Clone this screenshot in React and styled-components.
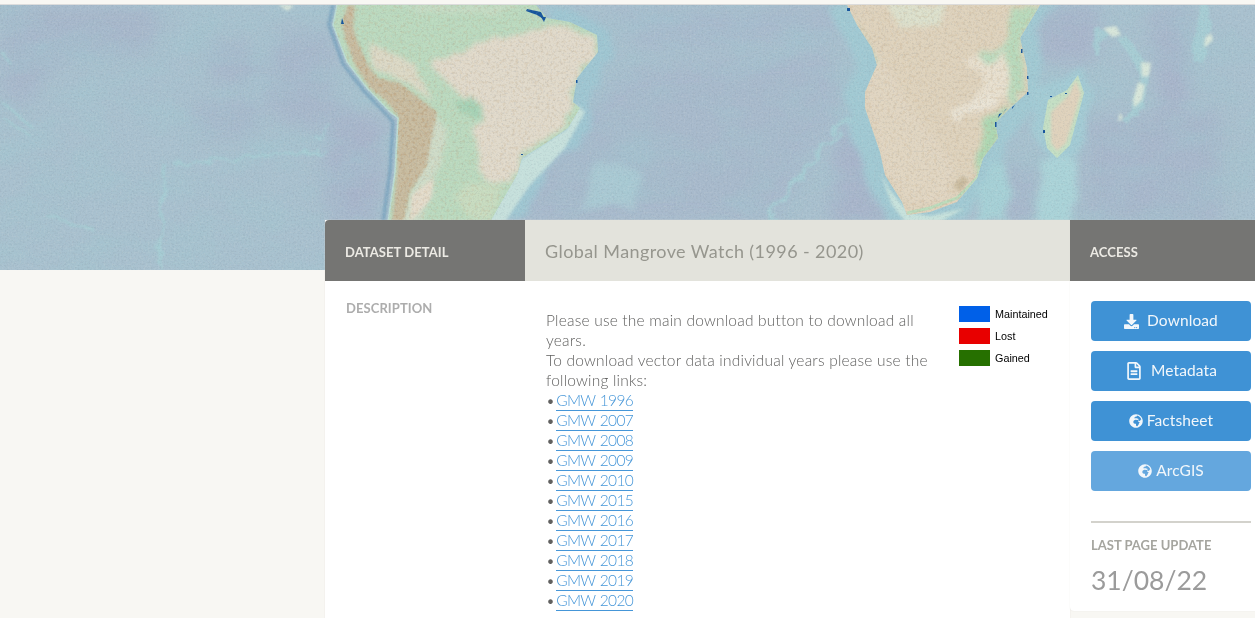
import React from "react";
import styled, { createGlobalStyle } from "styled-components";
import { FaDownload, FaRegFileAlt, FaGlobeAfrica } from "react-icons/fa";

const GlobalStyle = createGlobalStyle`
  html, body {
    margin: 0;
    height: 100%;
    overflow: hidden;
    background: #f8f7f3;
  }
`;

const years = [1996, 2007, 2008, 2009, 2010, 2015, 2016, 2017, 2018, 2019, 2020];

const legend = [
  { label: "Maintained", color: "#0060e8" },
  { label: "Lost", color: "#e80000" },
  { label: "Gained", color: "#267000" },
];

const buttons = [
  { label: "Download", icon: <FaDownload size={15} />, gap: 8 },
  { label: "Metadata", icon: <FaRegFileAlt size={18} />, gap: 8 },
  { label: "Factsheet", icon: <FaGlobeAfrica size={14} />, gap: 4 },
  { label: "ArcGIS", icon: <FaGlobeAfrica size={14} />, gap: 4, faded: true },
];

const SOUTH_AMERICA =
  "M337 5L333 25L347 62L367 88L390 112L398 118L395 172L388 222L490 222L517 175L522 158L543 145L568 128L580 108L573 102L577 78L598 52L597 35L570 22L547 18L536 5Z";
const ANDES =
  "M348 5L355 5L353 25L356 38L368 65L378 78L400 83L437 112L430 145L427 165L410 192L403 222L392 222L397 172L398 115L385 100L370 88L355 65L345 38L342 22Z";
const AFRICA =
  "M847 5L857 25L872 48L877 65L865 92L865 108L880 152L885 175L902 202L907 215L930 212L957 202L977 178L983 158L998 138L995 123L1010 108L1028 92L1027 68L1020 38L1040 5Z";
const MADAGASCAR =
  "M1078 75L1084 93L1070 145L1057 158L1047 148L1043 128L1048 100L1067 90Z";

// Satellite style background map, coordinates are page pixels
const WorldMap = () => (
  <MapSvg viewBox="0 5 1255 265" preserveAspectRatio="none">
    <defs>
      <filter id="cloud" x="0" y="0" width="100%" height="100%" colorInterpolationFilters="sRGB">
        <feTurbulence type="fractalNoise" baseFrequency="0.018 0.03" numOctaves="5" seed="11" />
        <feColorMatrix values="0 0 0 0 0.63  0 0 0 0 0.79  0 0 0 0 0.82  1.6 0 0 0 -0.6" />
      </filter>
      <filter id="grainDark" x="0" y="0" width="100%" height="100%" colorInterpolationFilters="sRGB">
        <feTurbulence type="fractalNoise" baseFrequency="0.55" numOctaves="3" seed="3" />
        <feColorMatrix values="0 0 0 0 0.45  0 0 0 0 0.5  0 0 0 0 0.56  0 3 0 0 -1.45" />
      </filter>
      <filter id="grainLight" x="0" y="0" width="100%" height="100%" colorInterpolationFilters="sRGB">
        <feTurbulence type="fractalNoise" baseFrequency="0.5" numOctaves="3" seed="9" />
        <feColorMatrix values="0 0 0 0 0.95  0 0 0 0 0.95  0 0 0 0 0.92  0 0 3 0 -1.45" />
      </filter>
      <filter id="grainLand" x="0" y="0" width="100%" height="100%" colorInterpolationFilters="sRGB">
        <feTurbulence type="fractalNoise" baseFrequency="0.32" numOctaves="3" seed="21" />
        <feColorMatrix values="0 0 0 0 0.74  0 0 0 0 0.64  0 0 0 0 0.5  0 4 0 0 -2" />
      </filter>
      <filter id="rough" x="-10%" y="-10%" width="120%" height="120%">
        <feTurbulence type="fractalNoise" baseFrequency="0.07" numOctaves="3" seed="5" result="n" />
        <feDisplacementMap in="SourceGraphic" in2="n" scale="10" result="d" />
        <feGaussianBlur in="d" stdDeviation="2.6" />
      </filter>
      <filter id="roughThin" x="-10%" y="-10%" width="120%" height="120%">
        <feTurbulence type="fractalNoise" baseFrequency="0.06" numOctaves="4" seed="14" result="n" />
        <feDisplacementMap in="SourceGraphic" in2="n" scale="14" result="d" />
        <feGaussianBlur in="d" stdDeviation="1.1" />
      </filter>
      <filter id="roughWide" x="-10%" y="-10%" width="120%" height="120%">
        <feTurbulence type="fractalNoise" baseFrequency="0.04" numOctaves="3" seed="8" result="n" />
        <feDisplacementMap in="SourceGraphic" in2="n" scale="16" result="d" />
        <feGaussianBlur in="d" stdDeviation="3" />
      </filter>
      <filter id="soft8" x="-30%" y="-30%" width="160%" height="160%"><feGaussianBlur stdDeviation="9" /></filter>
      <filter id="soft2" x="-30%" y="-30%" width="160%" height="160%"><feGaussianBlur stdDeviation="1.4" /></filter>
      <clipPath id="sa"><path d={SOUTH_AMERICA} /></clipPath>
      <clipPath id="andes"><path d={ANDES} /></clipPath>
      <clipPath id="af"><path d={AFRICA} /></clipPath>
      <clipPath id="mg"><path d={MADAGASCAR} /></clipPath>
    </defs>

    <rect x="0" y="5" width="1255" height="265" fill="#a9c1cf" />

    {/* deep basins */}
    <g fill="#a8b5cb" filter="url(#soft8)">
      <path d="M0 5L165 5L150 50L60 60L20 110L0 90Z" opacity="0.8" />
      <path d="M205 45L250 45L262 80L215 85Z" opacity="0.8" />
      <path d="M275 35L335 30L330 130L290 125L265 105Z" opacity="0.8" />
      <path d="M190 105L260 100L255 135L200 135Z" opacity="0.8" />
      <path d="M335 100L385 125L378 225L330 225L325 170Z" />
      <path d="M530 160L625 70L830 50L845 110L820 140L780 220L510 225Z" opacity="0.55" />
      <path d="M610 5L840 5L835 40L640 50Z" opacity="0.5" />
      <path d="M1040 5L1100 5L1095 60L1040 60Z" />
      <path d="M1150 5L1190 5L1190 100L1160 120Z" />
      <path d="M1010 165L1035 165L1032 225L1010 225Z" />
      <path d="M1085 120L1220 110L1220 225L1085 225Z" opacity="0.8" />
      <path d="M835 130L865 120L880 205L900 225L830 225Z" />
    </g>
    <rect x="0" y="5" width="1255" height="265" filter="url(#cloud)" opacity="0.5" />

    {/* shelf seas and ridges */}
    <g fill="none" stroke="#a6d0d5" filter="url(#roughThin)" opacity="0.75">
      <path d="M0 50L12 65M0 100L35 130M165 165L160 268M45 215L95 230M175 165L325 150M318 140L330 125" strokeWidth="2.5" />
      <path d="M2 118L30 135" strokeWidth="2" />
      <path d="M830 135C845 125 855 118 862 112" strokeWidth="6" />
      <path d="M768 222C790 190 800 175 812 160C825 140 835 140 845 135" strokeWidth="4" />
      <path d="M1105 30C1095 38 1094 48 1098 52M1124 40C1140 60 1148 75 1142 95L1125 122" strokeWidth="9" />
      <path d="M1205 5L1198 62" strokeWidth="10" />
    </g>
    <g filter="url(#roughWide)">
      <path d="M548 5L575 12L610 32L612 58L590 90L592 128L575 150L545 170L525 222L480 226L500 160L570 90Z" fill="#9fc6d2" />
      <path d="M590 160L640 170L630 205L580 210Z" fill="#aacfd6" opacity="0.7" />
      <path d="M825 5L845 40L858 65L845 95L850 130L865 175L888 225L955 224L990 185L1005 150L1018 122L1040 95L1042 60L1035 30L1060 5Z" fill="#a1c9d3" />
      <path d="M1030 95L1080 65L1094 95L1078 155L1060 168L1034 140Z" fill="#a3cbd4" />
      <path d="M988 160L1008 165L1006 222L975 222Z" fill="#a6d0d6" />
      <path d="M1040 160L1075 160L1078 200L1065 225L1038 225Z" fill="#aad3d8" />
    </g>
    <g fill="#d8e6da" filter="url(#soft2)">
      <path d="M1103 28L1116 26L1121 35L1112 37Z" />
      <path d="M1141 62L1151 63L1149 76L1142 77Z" />
      <path d="M1138 82L1145 85L1142 100L1134 108L1133 100Z" />
      <path d="M1211 33L1213 40L1204 48L1205 38Z" />
      <path d="M278 5L294 5L288 11Z" />
      <path d="M1120 112L1123 118L1118 122Z" />
    </g>
    <path d="M880 172L892 205L907 224L940 222L965 208L930 216L908 212L890 190Z" fill="#c7e2dc" filter="url(#soft2)" />
    <path d="M522 158L512 180L488 222L505 222L530 185L565 148L585 112L576 104L568 128Z" fill="#c6e0dc" filter="url(#soft2)" />

    {/* South America */}
    <g clipPath="url(#sa)">
      <rect x="320" y="5" width="300" height="220" fill="#bbdabf" />
      <g filter="url(#rough)">
        <path d="M430 65L470 45L510 35L560 25L597 38L597 55L573 82L572 105L563 128L523 152L517 172L510 182L483 180L473 132L483 118L460 95Z" fill="#e1dacb" />
        <path d="M367 42L413 62L433 102L407 82L373 68Z" fill="#dcd9c6" />
        <path d="M400 5L520 5L500 14L420 12Z" fill="#c6dcc4" />
        <path d="M457 102L470 96L484 108L478 118L462 114Z" fill="#a6d2b5" />
        <path d="M433 112L447 130L437 180L420 222L396 222L412 192Z" fill="#cfdcc8" />
        <path d="M453 195L470 182L505 185L490 217L470 218Z" fill="#c8dcc0" />
      </g>
      <path d={ANDES} fill="#c8bca0" filter="url(#soft2)" />
      <path d="M412 195L434 178L430 200L410 222Z" fill="#e4dccb" filter="url(#soft2)" />
      <rect x="320" y="5" width="300" height="220" filter="url(#grainLand)" opacity="0.22" />
    </g>
    <g clipPath="url(#andes)">
      <rect x="330" y="5" width="120" height="220" filter="url(#grainLand)" opacity="0.5" />
    </g>
    <path d="M337 5L333 25L347 62L367 88L390 112L398 118L395 172L388 222" fill="none" stroke="#bcdcd4" strokeWidth="1.5" />
    <path d="M333 5L329 25L343 64L364 91L387 115L393 122L390 172L383 222" fill="none" stroke="#6d9bb9" strokeWidth="2.5" filter="url(#soft2)" />

    {/* Africa */}
    <g clipPath="url(#af)">
      <rect x="840" y="5" width="210" height="220" fill="#dfd3bd" />
      <g filter="url(#rough)">
        <path d="M887 5L945 5L940 25L900 28Z" fill="#dde1cd" />
        <path d="M875 48L900 90L955 170L945 200L910 205L885 170L868 100Z" fill="#e1d6c2" />
        <path d="M960 60L1012 50L1024 92L995 100L975 105L985 75Z" fill="#e8e0cf" />
        <path d="M1012 8L1040 5L1022 40L1025 90L1010 108L1006 55Z" fill="#b9dabc" />
        <path d="M980 55L1010 42L1006 52L985 65Z" fill="#bcdcbf" />
        <path d="M947 112L990 95L1000 100L955 120Z" fill="#eae4d6" />
        <path d="M983 122L1008 105L1000 138L985 160L975 175L983 140Z" fill="#aed8b3" />
        <path d="M855 15L870 50L880 65L872 60Z" fill="#bcdcbf" />
      </g>
      <path d="M953 186L962 176L969 180L960 192Z" fill="#c9bb9f" filter="url(#soft2)" />
      <path d="M907 213L930 208L957 198L977 178L983 158" fill="none" stroke="#bcdcbc" strokeWidth="3" />
      <rect x="840" y="5" width="210" height="220" filter="url(#grainLand)" opacity="0.22" />
    </g>
    <g clipPath="url(#mg)">
      <rect x="1040" y="70" width="50" height="92" fill="#c4dfc4" />
      <path d="M1076 80L1081 94L1066 143L1057 151L1051 143L1051 112L1068 96Z" fill="#dfd2bc" filter="url(#soft2)" />
    </g>

    {/* mangrove spots */}
    <g fill="#15549c">
      <path d="M527 9L541 12L545 20L537 15L526 11Z" />
      <path d="M541 17L546 17L544 22Z" />
      <path d="M342 18L344 24L341 24Z" />
      <rect x="847" y="8" width="3" height="3" />
      <rect x="1043" y="130" width="2" height="3" />
      <path d="M999 114L1002 113L998 118ZM1005 110L1007 108L1004 112ZM1012 107L1015 105L1012 109Z" />
      <rect x="1027" y="92" width="1.5" height="3" />
      <rect x="1027" y="76" width="1.5" height="3" />
      <rect x="1021" y="49" width="1.5" height="4" />
      <rect x="995" y="122" width="1.5" height="5" />
      <rect x="1050" y="96" width="2" height="1" />
      <rect x="1065" y="93" width="2" height="1" />
      <rect x="576" y="80" width="1.5" height="3" />
      <rect x="521" y="154" width="2" height="1" />
    </g>
    <rect x="0" y="5" width="1255" height="265" filter="url(#grainDark)" opacity="0.14" />
    <rect x="0" y="5" width="1255" height="265" filter="url(#grainLight)" opacity="0.12" />
  </MapSvg>
);

const App = () => (
  <Page>
    <GlobalStyle />
    <Hero>
      <WorldMap />
    </Hero>
    <Layout>
      <Main>
        <HeadLabel $rounded>DATASET DETAIL</HeadLabel>
        <Title>Global Mangrove Watch (1996 - 2020)</Title>
        <Label>DESCRIPTION</Label>
        <Description>
          <Text>
            Please use the main download button to download all years.
            <br />
            To download vector data individual years please use the following links:
            {years.map((year) => (
              <Item key={year}>
                <span>•</span>
                <DataLink href="#">GMW {year}</DataLink>
              </Item>
            ))}
          </Text>
          <Legend>
            {legend.map((row) => (
              <LegendRow key={row.label}>
                <Swatch $color={row.color} />
                {row.label}
              </LegendRow>
            ))}
          </Legend>
        </Description>
      </Main>
      <Aside>
        <HeadLabel>ACCESS</HeadLabel>
        <AsideBody>
          <Buttons>
            {buttons.map((b) => (
              <Button key={b.label} $faded={b.faded} $gap={b.gap}>
                {b.icon}
                <ButtonText>{b.label}</ButtonText>
              </Button>
            ))}
          </Buttons>
          <Update>
            <UpdateLabel>LAST PAGE UPDATE</UpdateLabel>
            <UpdateDate>31/08/22</UpdateDate>
          </Update>
        </AsideBody>
      </Aside>
    </Layout>
  </Page>
);

const Page = styled.div`
  height: 100vh;
  overflow: hidden;
  box-sizing: border-box;
  padding-top: 4px;
  background: #f8f7f3;
  font-family: Lato, "Open Sans", sans-serif;
`;

const Hero = styled.div`
  height: 265px;
  border-top: 1px solid #dcdcdc;
`;

const MapSvg = styled.svg`
  display: block;
  width: 100%;
  height: 100%;
`;

const Layout = styled.div`
  display: grid;
  grid-template-columns: 745px 185px;
  align-items: start;
  margin: -50px 0 0 325px;
  position: relative;
`;

const Main = styled.section`
  display: grid;
  grid-template-columns: 200px 545px;
  grid-template-rows: 61px auto;
  background: #fff;
  min-height: 420px;
  box-shadow: 0 0 1px #dedcd6;
`;

const HeadLabel = styled.h2`
  margin: 0;
  height: 61px;
  box-sizing: border-box;
  padding: 24px 0 0 20px;
  background: #757573;
  color: #eceae4;
  font-size: 13px;
  line-height: 17px;
  font-weight: 700;
  letter-spacing: 0.06px;
  border-top-left-radius: ${(p) => (p.$rounded ? "4px" : "0")};
`;

const Title = styled.h1`
  margin: 0;
  padding: 20px 0 0 20px;
  box-sizing: border-box;
  background: #e3e3dc;
  color: #96968e;
  font-size: 18px;
  line-height: 22px;
  font-weight: 400;
  letter-spacing: 0.41px;
`;

const Label = styled.div`
  padding: 19px 0 0 21px;
  color: #adadad;
  font-size: 13px;
  line-height: 16px;
  font-weight: 700;
  letter-spacing: 0.08px;
`;

const Description = styled.div`
  display: flex;
  align-items: flex-start;
  padding: 29px 0 0 21px;
`;

const Text = styled.div`
  width: 392px;
  color: #616160;
  font-size: 15.5px;
  line-height: 20px;
  font-weight: 300;
  letter-spacing: 0.2px;
`;

const Item = styled.div`
  display: flex;
  gap: 1px;
  height: 20px;
`;

const DataLink = styled.a`
  align-self: flex-start;
  color: #4596d8;
  font-size: 15.5px;
  line-height: 20px;
  letter-spacing: -0.65px;
  word-spacing: 1px;
  text-decoration: none;
  border-bottom: 1px solid #4596d8;
`;

const Legend = styled.div`
  display: flex;
  flex-direction: column;
  gap: 6px;
  margin: -4px 0 0 21px;
`;

const LegendRow = styled.div`
  display: flex;
  align-items: center;
  gap: 5px;
  height: 16px;
  color: #000;
  font-family: "Liberation Sans", Arial, sans-serif;
  font-size: 10.8px;
`;

const Swatch = styled.span`
  width: 31px;
  height: 16px;
  background: ${(p) => p.$color};
`;

const Aside = styled.aside`
  background: #fff;
  box-shadow: 0 0 1px #dedcd6;
  border-bottom-left-radius: 4px;
`;

const AsideBody = styled.div`
  padding: 20px 4px 0 21px;
  height: 330px;
  box-sizing: border-box;
`;

const Buttons = styled.div`
  display: flex;
  flex-direction: column;
  gap: 10px;
`;

const Button = styled.button`
  display: flex;
  align-items: center;
  justify-content: center;
  gap: ${(p) => p.$gap}px;
  height: 40px;
  padding: 0;
  border: 0;
  border-radius: 4px;
  background: ${(p) => (p.$faded ? "#64a7de" : "#3f92d5")};
  color: #f2f7fb;
  font-family: inherit;
  font-size: 15.5px;
  font-weight: 400;
  letter-spacing: 0.1px;
`;

const ButtonText = styled.span`
  margin-top: -2px;
`;

const Update = styled.div`
  margin-top: 30px;
  padding-top: 15px;
  border-top: 2px solid #d3d2cc;
`;

const UpdateLabel = styled.div`
  color: #a5a59f;
  font-size: 13px;
  line-height: 15px;
  font-weight: 700;
`;

const UpdateDate = styled.div`
  margin-top: 11px;
  color: #9b9b9b;
  font-size: 26.5px;
  line-height: 32px;
  font-weight: 400;
`;

export default App;
